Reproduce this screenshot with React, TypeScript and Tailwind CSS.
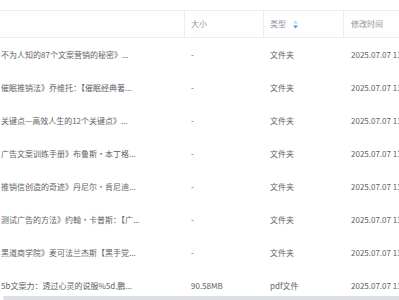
const rows = [
  { name: "不为人知的87个文案营销的秘密》...", size: "-", type: "文件夹" },
  { name: "催眠推销法》乔维托：【催眠经典著...", size: "-", type: "文件夹" },
  { name: "关键点—高效人生的12个关键点》...", size: "-", type: "文件夹" },
  { name: "广告文案训练手册》布鲁斯·本丁格...", size: "-", type: "文件夹" },
  { name: "推销信创造的奇迹》丹尼尔·肯尼迪...", size: "-", type: "文件夹" },
  { name: "测试广告的方法》约翰·卡普斯：【广...", size: "-", type: "文件夹" },
  { name: "黑道商学院》麦可法兰杰斯【黑手党...", size: "-", type: "文件夹" },
  { name: "5b文案力：透过心灵的说服%5d.鹏...", size: "90.58MB", type: "pdf文件" },
]

function SortIcon() {
  return (
    <svg width="5" height="9" viewBox="0 0 5 9" className="ml-[7px]">
      <path d="M2.5 0.5 L5 3.5 L0 3.5 Z" fill="#c0d9f5" />
      <path d="M0 5.5 L5 5.5 L2.5 8.5 Z" fill="#409eff" />
    </svg>
  )
}

export default function App() {
  return (
    <div
      className="relative w-[399px] h-[300px] overflow-hidden bg-white text-[8px] leading-normal"
      style={{ fontFamily: '"Noto Sans CJK SC", "Noto Sans", sans-serif' }}
    >
      {/* header */}
      <div className="mt-[10px] flex h-[28px] border-y border-[#ebeef5] text-[#909399]">
        <div className="w-[185px] shrink-0 border-r border-[#ebeef5]"></div>
        <div className="flex w-[79px] shrink-0 items-center border-r border-[#ebeef5] pl-[6px]">大小</div>
        <div className="flex w-[80px] shrink-0 items-center border-r border-[#ebeef5] pl-[6px]">
          类型
          <SortIcon />
        </div>
        <div className="flex flex-1 items-center pl-[7px] whitespace-nowrap">修改时间</div>
      </div>

      {/* rows */}
      {rows.map((r, i) => (
        <div key={i} className="flex h-[33px] items-center text-[#606266] whitespace-nowrap">
          <div className="w-[185px] shrink-0 pl-[1px]">{r.name}</div>
          <div className="w-[79px] shrink-0 pl-[6px]">{r.size}</div>
          <div className="w-[80px] shrink-0 pl-[6px]">{r.type}</div>
          <div className="flex-1 pl-[7px]">2025.07.07 13:42</div>
        </div>
      ))}

      {/* horizontal scrollbar */}
      <div className="absolute bottom-0 left-[3px] right-0 h-[4px] rounded-l-full bg-[#dcdfe6]"></div>
    </div>
  )
}
